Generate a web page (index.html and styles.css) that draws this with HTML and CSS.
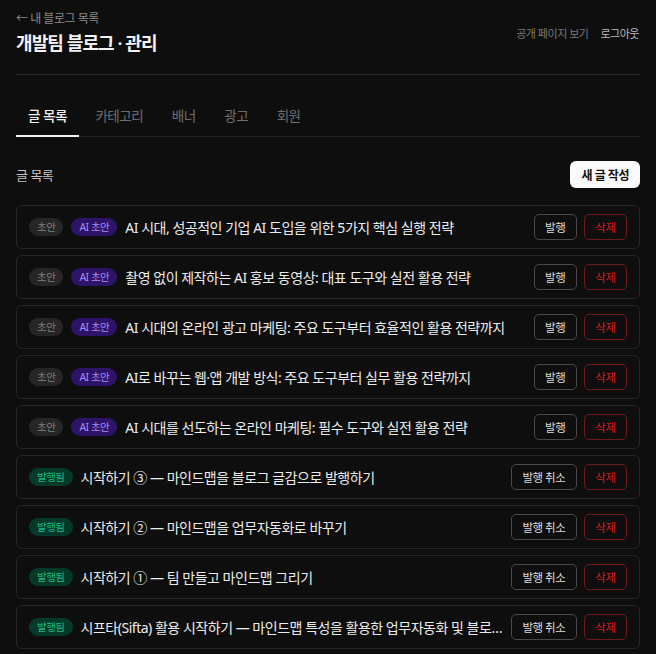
FILE: index.html
```html
<!DOCTYPE html>
<html lang="ko">
<head>
	<meta charset="UTF-8">
	<title>개발팀 블로그 · 관리</title>
	<link rel="stylesheet" href="styles.css">
</head>
<body>
	<main class="admin">
		<header class="top">
			<div class="title-box">
				<a class="back" href="#">← 내 블로그 목록</a>
				<h1>개발팀 블로그 · 관리</h1>
			</div>
			<nav class="links">
				<a href="#" class="public">공개 페이지 보기</a>
				<a href="#" class="logout">로그아웃</a>
			</nav>
		</header>

		<nav class="tabs">
			<a href="#" class="tab active">글 목록</a>
			<a href="#" class="tab">카테고리</a>
			<a href="#" class="tab">배너</a>
			<a href="#" class="tab">광고</a>
			<a href="#" class="tab">회원</a>
		</nav>

		<section class="posts">
			<div class="posts-head">
				<h2>글 목록</h2>
				<button class="btn-new">새 글 작성</button>
			</div>

			<ul class="post-list">
				<li class="post">
					<span class="badge draft">초안</span>
					<span class="badge ai">AI 초안</span>
					<span class="post-title">AI 시대, 성공적인 기업 AI 도입을 위한 5가지 핵심 실행 전략</span>
					<button class="btn">발행</button>
					<button class="btn danger">삭제</button>
				</li>
				<li class="post">
					<span class="badge draft">초안</span>
					<span class="badge ai">AI 초안</span>
					<span class="post-title">촬영 없이 제작하는 AI 홍보 동영상: 대표 도구와 실전 활용 전략</span>
					<button class="btn">발행</button>
					<button class="btn danger">삭제</button>
				</li>
				<li class="post">
					<span class="badge draft">초안</span>
					<span class="badge ai">AI 초안</span>
					<span class="post-title">AI 시대의 온라인 광고 마케팅: 주요 도구부터 효율적인 활용 전략까지</span>
					<button class="btn">발행</button>
					<button class="btn danger">삭제</button>
				</li>
				<li class="post">
					<span class="badge draft">초안</span>
					<span class="badge ai">AI 초안</span>
					<span class="post-title">AI로 바꾸는 웹·앱 개발 방식: 주요 도구부터 실무 활용 전략까지</span>
					<button class="btn">발행</button>
					<button class="btn danger">삭제</button>
				</li>
				<li class="post">
					<span class="badge draft">초안</span>
					<span class="badge ai">AI 초안</span>
					<span class="post-title">AI 시대를 선도하는 온라인 마케팅: 필수 도구와 실전 활용 전략</span>
					<button class="btn">발행</button>
					<button class="btn danger">삭제</button>
				</li>
				<li class="post">
					<span class="badge live">발행됨</span>
					<span class="post-title">시작하기 ③ — 마인드맵을 블로그 글감으로 발행하기</span>
					<button class="btn">발행 취소</button>
					<button class="btn danger">삭제</button>
				</li>
				<li class="post">
					<span class="badge live">발행됨</span>
					<span class="post-title">시작하기 ② — 마인드맵을 업무자동화로 바꾸기</span>
					<button class="btn">발행 취소</button>
					<button class="btn danger">삭제</button>
				</li>
				<li class="post">
					<span class="badge live">발행됨</span>
					<span class="post-title">시작하기 ① — 팀 만들고 마인드맵 그리기</span>
					<button class="btn">발행 취소</button>
					<button class="btn danger">삭제</button>
				</li>
				<li class="post">
					<span class="badge live">발행됨</span>
					<span class="post-title">시프타(Sifta) 활용 시작하기 — 마인드맵 특성을 활용한 업무자동화 및 블로그 글쓰기까지</span>
					<button class="btn">발행 취소</button>
					<button class="btn danger">삭제</button>
				</li>
			</ul>
		</section>
	</main>
</body>
</html>
```

FILE: styles.css
```css
/* base */
body {
	background-color: #0e0e0e;
	color: #e6e6e6;
	font-family: "Noto Sans", "Noto Sans CJK KR", sans-serif;
	letter-spacing: -0.03em;
	margin: 0px;
}
a {
	text-decoration: none;
}
button {
	font-family: inherit;
	letter-spacing: inherit;
	cursor: pointer;
}

main.admin {
	padding: 0px 16px 16px;
}

/* header.top */
header.top {
	align-items: center;
	border-bottom: 1px solid #262626;
	display: flex;
	justify-content: space-between;
	padding: 10px 0px 18px;
}
header.top .back {
	color: #8a8a8a;
	display: block;
	font-size: 12px;
	line-height: 18px;
}
header.top h1 {
	color: #f2f2f2;
	font-size: 18px;
	font-weight: 600;
	letter-spacing: -0.05em;
	line-height: 26px;
	margin: 2px 0px 0px;
}
header.top nav.links {
	display: flex;
	gap: 12px;
	font-size: 11px;
	padding-right: 1px;
}
header.top nav.links .public { color: #7a7a7a; }
header.top nav.links .logout { color: #bdbdbd; }

/* nav.tabs */
nav.tabs {
	border-bottom: 1px solid #222;
	display: flex;
	gap: 4.5px;
	margin-top: 22px;
}
nav.tabs .tab {
	border-bottom: 2px solid transparent;
	color: #6e6e6e;
	font-size: 13.6px;
	letter-spacing: -0.04em;
	line-height: 20px;
	margin-bottom: -1px;
	padding: 9px 12px 9px;
}
nav.tabs .tab.active {
	border-bottom-color: #f2f2f2;
	color: #f2f2f2;
	font-weight: 500;
}

/* section.posts */
section.posts {
	margin-top: 24px;
}
.posts-head {
	align-items: center;
	display: flex;
	justify-content: space-between;
	margin-bottom: 17px;
}
.posts-head h2 {
	color: #c4c4c4;
	font-size: 13px;
	font-weight: 400;
	margin: 0px;
}
.btn-new {
	background-color: #fafafa;
	border: none;
	border-radius: 6px;
	color: #111;
	font-size: 12px;
	font-weight: 600;
	height: 27px;
	padding: 0px 11px;
}

ul.post-list {
	display: flex;
	flex-direction: column;
	gap: 6px;
	list-style: none;
	margin: 0px;
	padding: 0px;
}
li.post {
	align-items: center;
	border: 1px solid #262626;
	border-radius: 6px;
	display: flex;
	height: 42px;
	padding: 0px 12px;
}

.badge {
	border-radius: 9px;
	flex-shrink: 0;
	font-size: 10.5px;
	height: 18px;
	line-height: 18px;
	margin-right: 8px;
	padding: 0px 8px;
}
.badge.draft { background-color: #262626; color: #808080; }
.badge.ai    { background-color: #2e1468; color: #a78bfa; }
.badge.live  { background-color: #053a2a; color: #19b982; }

.post-title {
	color: #ececec;
	flex: 1;
	font-size: 14px;
	min-width: 0;
	overflow: hidden;
	text-overflow: ellipsis;
	white-space: nowrap;
	padding-right: 8px;
}

.btn {
	background: transparent;
	border: 1px solid #4a4a4a;
	border-radius: 5px;
	color: #dcdcdc;
	flex-shrink: 0;
	font-size: 11.5px;
	height: 26px;
	padding: 0px 10.5px;
}
.btn + .btn {
	margin-left: 7px;
}
.btn.danger {
	border-color: #6e1a1a;
	color: #d61f1f;
}
```
